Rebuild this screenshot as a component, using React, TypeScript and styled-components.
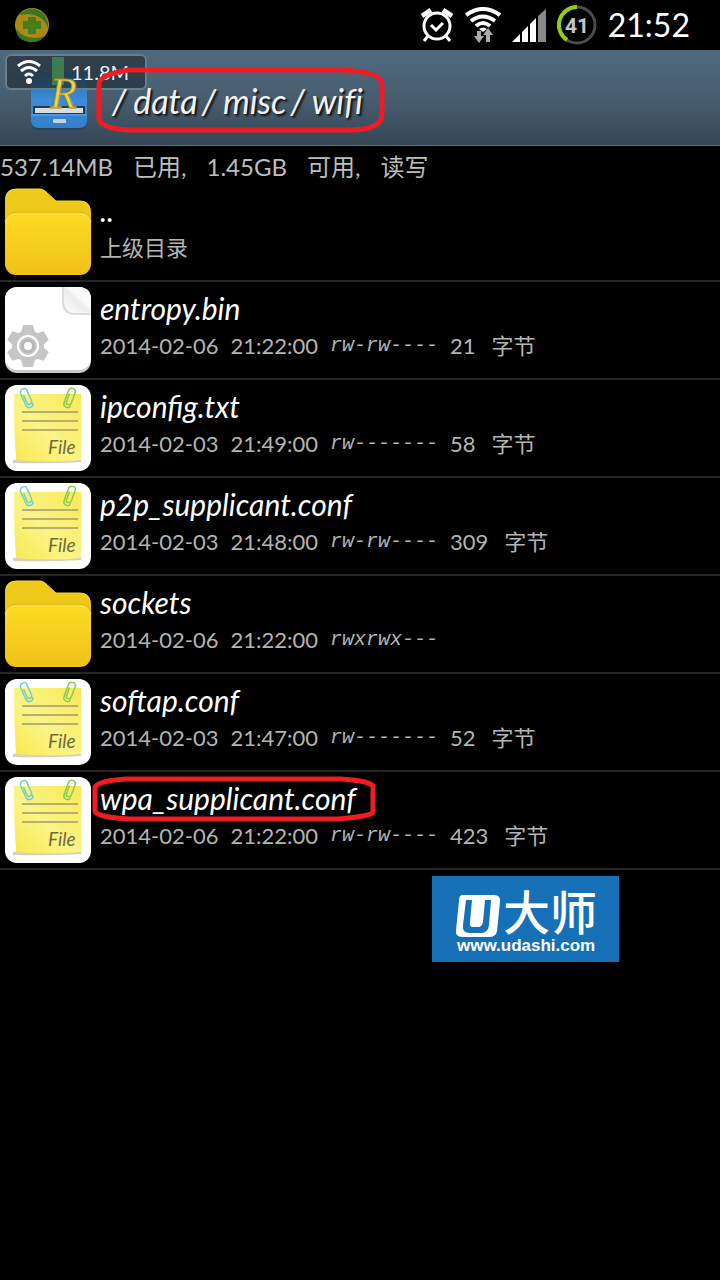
import React from 'react';
import styled, { createGlobalStyle } from 'styled-components';

const GlobalStyle = createGlobalStyle`
  * { box-sizing: border-box; }
  body {
    margin: 0;
    background: #000;
    color: #fff;
    font-family: Lato, "Noto Sans CJK SC", sans-serif;
    font-variant-ligatures: none;
  }
`;

const Screen = styled.div`
  min-height: 100vh;
  background: #000;
`;

const StatusBar = styled.div`
  display: flex;
  align-items: center;
  justify-content: space-between;
  height: 50px;
  padding: 0 30px 0 15px;
`;

const StatusIcons = styled.div`
  display: flex;
  align-items: center;
  gap: 11px;
`;

const Clock = styled.time`
  font-size: 32px;
  line-height: 40px;
`;

const Header = styled.header`
  position: relative;
  display: flex;
  align-items: center;
  gap: 20px;
  height: 96px;
  padding: 6px 30px 0;
  background: linear-gradient(#4f697e, #485e70 50%, #354655);
  border-bottom: 1px solid #5f757d;
`;

const PathTitle = styled.h1`
  position: relative;
  margin: 0;
  font-size: 34px;
  line-height: 40px;
  font-weight: 400;
  font-style: italic;
  color: #f2f2f2;
  text-shadow: 2px 2px 2px #111;
`;

const Slash = styled.span`
  padding: 0 7px 0 4px;
`;

const SpeedBadge = styled.div`
  position: absolute;
  top: 4px;
  left: 5px;
  display: flex;
  align-items: center;
  gap: 30px;
  width: 142px;
  height: 36px;
  padding: 0 10px;
  border: 2px solid #667f8e;
  border-radius: 6px;
  background: rgba(35, 47, 58, 0.72);
  font-size: 20px;
  color: #eef2f5;
`;

const Marker = styled.svg<{ $inset: string }>`
  position: absolute;
  inset: ${(p) => p.$inset};
  overflow: visible;
  pointer-events: none;
`;

const Storage = styled.div`
  display: flex;
  gap: 20px;
  height: 38px;
  padding-top: 2px;
  font-size: 24px;
  line-height: 38px;
  color: #bdbdbd;
`;

const FileList = styled.ul`
  margin: 0;
  padding: 0;
  list-style: none;
`;

const FileItem = styled.li`
  border-bottom: 2px solid #262626;
`;

const FileButton = styled.button`
  display: flex;
  gap: 8px;
  width: 100%;
  height: 96px;
  padding: 4px;
  border: 0;
  background: transparent;
  color: inherit;
  font-family: inherit;
  text-align: left;
`;

const FileText = styled.span`
  display: flex;
  flex: 1;
  flex-direction: column;
  align-items: flex-start;
  gap: 2px;
  padding-top: 4px;
`;

const FileName = styled.span`
  position: relative;
  font-size: 30px;
  line-height: 36px;
  font-style: italic;
  color: #fff;
`;

const FileMeta = styled.span`
  display: flex;
  gap: 12px;
  font-size: 22px;
  line-height: 36px;
  color: #b4b4b4;
`;

const Mode = styled.span`
  font-family: "Liberation Mono", monospace;
  font-size: 20px;
  font-style: italic;
`;

const Size = styled.span`
  display: flex;
  gap: 16px;
`;

const Brand = styled.a`
  display: block;
  width: 187px;
  height: 86px;
  margin: 6px 0 0 60%;
  background: #1670b8;
`;

const FolderIcon = () => (
  <svg width="88" height="88" viewBox="0 0 88 88" aria-hidden="true">
    <defs>
      <linearGradient id="folder" x1="0" y1="0" x2="0" y2="1">
        <stop offset="0" stopColor="#ffda22" />
        <stop offset="1" stopColor="#eec118" />
      </linearGradient>
    </defs>
    <path d="M1 40V12Q1 1 12 1H36Q39 1 41 3L52 13H76Q87 13 87 25V44H1Z" fill="#efc91a" />
    <path d="M2 12Q3 1 12 1H36Q39 1 41 3L52 13H76Q85 13 86 22" fill="none" stroke="#f5d53c" />
    <path d="M1 34Q2 24 12 24H76Q86 24 87 34" fill="none" stroke="#dfb916" strokeWidth="1" />
    <rect x="1" y="25" width="86" height="62" rx="11" fill="url(#folder)" />
    <path d="M2 35Q3 26 12 26H76Q85 26 86 35" fill="none" stroke="#ffe150" strokeWidth="1" />
  </svg>
);

const BinaryIcon = () => (
  <svg width="88" height="88" viewBox="0 0 88 88" aria-hidden="true">
    <defs>
      <linearGradient id="fold" x1="0" y1="1" x2="1" y2="0">
        <stop offset="0" stopColor="#fff" />
        <stop offset=".5" stopColor="#ededed" />
        <stop offset=".6" stopColor="#fafafa" />
      </linearGradient>
    </defs>
    <rect x="1" y="1" width="86" height="86" rx="12" fill="#c9c9c9" />
    <rect x="1" y="1" width="86" height="83" rx="12" fill="#fff" />
    <path d="M59 1H76Q87 2 87 13V28H70Q59 27 59 16Z" fill="url(#fold)" />
    <path d="M59 1V16Q59 27 70 28H86" fill="none" stroke="#dcdcdc" strokeWidth="2" />
    <g transform="translate(24 60)" fill="#c6c7c5">
      <circle r="16" />
      {[0, 60, 120, 180, 240, 300].map((a) => (
        <path key={a} d="M-7 -13L-5 -21H5L7 -13Z" transform={`rotate(${a})`} />
      ))}
      <circle r="10" fill="none" stroke="#fff" strokeWidth="2" />
      <circle r="7" fill="#b7b7b7" />
      <circle r="4" fill="#fff" />
    </g>
  </svg>
);

const clipPath = 'M-2 -4V5Q-2 7 0 7Q3 7 3 4V-7Q3 -10 0 -10Q-4 -10 -4 -6V6Q-4 10 0 10Q3 10 3 7';

const NoteIcon = () => (
  <svg width="88" height="88" viewBox="0 0 88 88" aria-hidden="true">
    <defs>
      <linearGradient id="note" x1="1" y1="0" x2="0" y2="1">
        <stop offset="0" stopColor="#f8e957" />
        <stop offset=".55" stopColor="#fbf487" />
        <stop offset="1" stopColor="#f8e94e" />
      </linearGradient>
    </defs>
    <rect x="1" y="1" width="86" height="86" rx="12" fill="#fff" />
    <path d="M9 76L77 74V78Q45 80 9 79Z" fill="#d9cfb8" />
    <path d="M10 10H77V76Q48 79 12 76Q10 50 10 10Z" fill="url(#note)" />
    <path d="M18 28H74M18 37H74M18 46H74" stroke="#b8ad72" strokeWidth="2" />
    <g fill="none" strokeWidth="1.5">
      <path d={clipPath} transform="translate(23 14) rotate(-24)" stroke="#77d0c2" />
      <path d={clipPath} transform="translate(66 14) rotate(20)" stroke="#8bcb52" />
    </g>
    <text x="44" y="70" fontFamily="Lato, sans-serif" fontStyle="italic" fontSize="19" fill="#726b39">
      File
    </text>
  </svg>
);

const icons = { folder: FolderIcon, binary: BinaryIcon, note: NoteIcon };

type Entry = {
  name: string;
  kind: keyof typeof icons;
  note?: string;
  date?: string;
  time?: string;
  mode?: string;
  size?: string;
  marked?: boolean;
};

const entries: Entry[] = [
  { name: '..', kind: 'folder', note: '上级目录' },
  { name: 'entropy.bin', kind: 'binary', date: '2014-02-06', time: '21:22:00', mode: 'rw-rw----', size: '21' },
  { name: 'ipconfig.txt', kind: 'note', date: '2014-02-03', time: '21:49:00', mode: 'rw-------', size: '58' },
  { name: 'p2p_supplicant.conf', kind: 'note', date: '2014-02-03', time: '21:48:00', mode: 'rw-rw----', size: '309' },
  { name: 'sockets', kind: 'folder', date: '2014-02-06', time: '21:22:00', mode: 'rwxrwx---' },
  { name: 'softap.conf', kind: 'note', date: '2014-02-03', time: '21:47:00', mode: 'rw-------', size: '52' },
  { name: 'wpa_supplicant.conf', kind: 'note', date: '2014-02-06', time: '21:22:00', mode: 'rw-rw----', size: '423', marked: true },
];

const WifiArcs = () => (
  <svg width="24" height="26" viewBox="0 0 24 26" fill="none" stroke="#fff" strokeWidth="3" aria-hidden="true">
    <path d="M1 7Q12 -2 23 7M4 12Q12 5 20 12M8 17Q12 13 16 17" />
    <circle cx="12" cy="22" r="3" fill="#fff" stroke="none" />
  </svg>
);

const AppLogo = () => (
  <svg width="58" height="60" viewBox="0 0 58 60" aria-hidden="true">
    <defs>
      <linearGradient id="drawer" x1="0" y1="0" x2="0" y2="1">
        <stop offset="0" stopColor="#24679f" />
        <stop offset=".5" stopColor="#3b8cd8" />
        <stop offset="1" stopColor="#347fc8" />
      </linearGradient>
    </defs>
    <rect x="1" y="2" width="56" height="57" rx="7" fill="#26465f" />
    <rect x="1" y="1" width="56" height="56" rx="7" fill="url(#drawer)" />
    <rect x="3" y="35" width="52" height="8" fill="#263b4d" />
    <rect x="5" y="37" width="48" height="5" fill="#d9dde0" />
    <path d="M1 44H57" stroke="#64adeb" />
    <rect x="23" y="48" width="13" height="4" rx="1" fill="#c5d2de" />
  </svg>
);

const LetterMark = styled.svg`
  position: absolute;
  top: 6px;
  left: 46px;
  overflow: visible;
`;

export default function App() {
  return (
    <>
      <GlobalStyle />
      <Screen>
        <StatusBar>
          <svg width="34" height="36" viewBox="0 0 34 36" aria-hidden="true">
            <circle cx="17" cy="18" r="17" fill="#a98a17" />
            <path d="M4 8Q14 -3 27 5Q34 12 33 21Q27 4 4 8ZM1 22Q2 35 18 35Q25 35 30 29Q12 35 1 22Z" fill="#3c7524" />
            <path d="M13 10H21V14H26V22H21V27H13V22H8V14H13Z" fill="#477c1d" />
          </svg>
          <StatusIcons>
            <svg width="34" height="36" viewBox="0 0 34 36" fill="none" stroke="#fff" aria-hidden="true">
              <circle cx="17" cy="19" r="13" strokeWidth="3" />
              <path d="M2 9L11 3M32 9L23 3" strokeWidth="5" />
              <path d="M11 18L16 23L23 16" strokeWidth="3" />
              <path d="M8 29L4 34M26 29L30 34" strokeWidth="3" />
            </svg>
            <svg width="36" height="36" viewBox="0 0 36 36" fill="none" stroke="#fff" strokeWidth="4" aria-hidden="true">
              <path d="M1 8Q18 -4 35 8M6 14Q18 5 30 14M11 19Q18 13 25 19" />
              <path d="M14 22Q18 19 22 22L18 25Z" fill="#fff" stroke="none" />
              <path d="M14 24V32M23 35V25" stroke="#aaa" />
              <path d="M9 29H19L14 36ZM18 28L23 21L28 28Z" fill="#aaa" stroke="none" />
            </svg>
            <svg width="34" height="34" viewBox="0 0 34 34" aria-hidden="true">
              <path d="M0 34L8 26V34ZM10 24L16 18V34H10ZM18 16L24 10V34H18Z" fill="#fff" />
              <path d="M26 8L34 1V34H26Z" fill="#888" />
            </svg>
            <svg width="40" height="40" viewBox="0 0 40 40" aria-hidden="true">
              <circle cx="20" cy="20" r="18" fill="none" stroke="#4c4c4c" strokeWidth="3" />
              <path d="M20 2A18 18 0 0 0 10 35" fill="none" stroke="#91cd13" strokeWidth="4" />
              <text x="20" y="28" textAnchor="middle" fontFamily="Roboto, sans-serif" fontWeight="700" fontSize="21" fill="#c4c4c4">
                41
              </text>
            </svg>
            <Clock>21:52</Clock>
          </StatusIcons>
        </StatusBar>

        <Header>
          <AppLogo />
          <SpeedBadge>
            <WifiArcs />
            <span>11.8M</span>
          </SpeedBadge>
          <LetterMark width="50" height="66" viewBox="0 0 50 66" aria-hidden="true">
            <rect x="6" y="1" width="12" height="28" fill="#3d7c4d" />
            <text x="4" y="52" fontFamily="'Liberation Serif', serif" fontStyle="italic" fontSize="44" fill="#e9d454" stroke="#9d882b">
              R
            </text>
          </LetterMark>
          <PathTitle>
            <Slash>/</Slash>data<Slash>/</Slash>misc<Slash>/</Slash>wifi
            <Marker $inset="-14px auto auto -12px" width="290" height="66" viewBox="0 0 290 66" fill="none" stroke="#f01c24" strokeWidth="5">
              <path d="M32 3H246Q286 5 286 17V47Q286 62 257 63H32Q3 61 3 51V17Q3 8 32 3Z" />
            </Marker>
          </PathTitle>
        </Header>

        <main>
          <Storage>
            <span>537.14MB</span>
            <span>已用,</span>
            <span>1.45GB</span>
            <span>可用,</span>
            <span>读写</span>
          </Storage>
          <FileList>
            {entries.map((entry) => {
              const Icon = icons[entry.kind];
              return (
                <FileItem key={entry.name}>
                  <FileButton type="button">
                    <Icon />
                    <FileText>
                      <FileName>
                        {entry.name}
                        {entry.marked && (
                          <Marker $inset="-4px auto auto -8px" width="284" height="46" viewBox="0 0 284 46" fill="none" stroke="#f01c24" strokeWidth="5">
                            <path d="M34 3H248Q281 5 281 11V36Q281 40 246 43H38Q3 41 3 35V12Q3 5 34 3Z" />
                          </Marker>
                        )}
                      </FileName>
                      <FileMeta>
                        {entry.note && <span>{entry.note}</span>}
                        {entry.date && <span>{entry.date}</span>}
                        {entry.time && <span>{entry.time}</span>}
                        {entry.mode && <Mode>{entry.mode}</Mode>}
                        {entry.size && (
                          <Size>
                            <span>{entry.size}</span>
                            <span>字节</span>
                          </Size>
                        )}
                      </FileMeta>
                    </FileText>
                  </FileButton>
                </FileItem>
              );
            })}
          </FileList>
          <Brand href="#udashi">
            <svg width="187" height="86" viewBox="0 0 187 86" fill="#fff">
              <path
                fillRule="evenodd"
                d="M30 19H62Q69 19 68 26L65 55Q64 61 57 61H30Q23 61 24 54L27 25Q27 19 30 19ZM34 24L31 49Q30 57 38 57H49Q56 57 57 49L59 24H53L51 46Q50 51 46 51H41Q37 51 38 46L40 24Z"
              />
              <path d="M43 19H51L48 49H40Z" />
              <text x="71" y="54" fontFamily="'Noto Sans CJK SC', sans-serif" fontWeight="500" fontSize="47">
                大师
              </text>
              <text x="25" y="75" fontFamily="'Liberation Sans', sans-serif" fontWeight="700" fontSize="17">
                www.udashi.com
              </text>
            </svg>
          </Brand>
        </main>
      </Screen>
    </>
  );
}
